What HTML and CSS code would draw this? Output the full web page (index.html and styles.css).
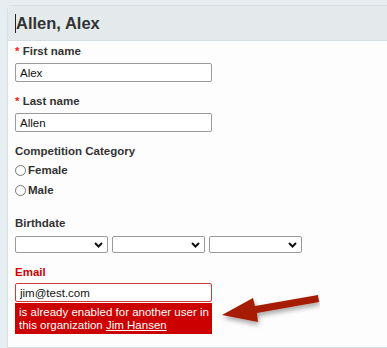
FILE: index.html
```html
<!DOCTYPE html>
<html>
<head>
<meta charset="utf-8" />
<title>Allen, Alex</title>
<link rel="stylesheet" href="styles.css">
</head>

<body>
<div class="panel">
    <div class="panel_head">
        <h1><span class="caret"></span>Allen, Alex</h1>
    </div>

    <div class="panel_body">
        <div class="field">
            <label class="field_label"><span class="req">*</span> First name</label>
            <input class="text_input" type="text" value="Alex" />
        </div>

        <div class="field">
            <label class="field_label"><span class="req">*</span> Last name</label>
            <input class="text_input" type="text" value="Allen" />
        </div>

        <div class="field">
            <label class="field_label">Competition Category</label>
            <div class="radio_row"><span class="radio"></span>Female</div>
            <div class="radio_row"><span class="radio"></span>Male</div>
        </div>

        <div class="field field_birth">
            <label class="field_label">Birthdate</label>
            <div class="select_row">
                <div class="select_box"><svg width="9" height="6" viewBox="0 0 9 6"><path d="M1 1 L4.5 4.5 L8 1" fill="none" stroke="#111" stroke-width="2"/></svg></div>
                <div class="select_box"><svg width="9" height="6" viewBox="0 0 9 6"><path d="M1 1 L4.5 4.5 L8 1" fill="none" stroke="#111" stroke-width="2"/></svg></div>
                <div class="select_box"><svg width="9" height="6" viewBox="0 0 9 6"><path d="M1 1 L4.5 4.5 L8 1" fill="none" stroke="#111" stroke-width="2"/></svg></div>
            </div>
        </div>

        <div class="field field_error">
            <label class="field_label">Email</label>
            <input class="text_input" type="text" value="jim@test.com" />
            <div class="error_box">is already enabled for another user in this organization <a href="#">Jim Hansen</a></div>
        </div>
    </div>
</div>

<!-- flèche d'annotation -->
<svg class="arrow" width="120" height="50" viewBox="200 285 120 50">
    <defs>
        <filter id="ombre" x="-20%" y="-40%" width="140%" height="180%">
            <feGaussianBlur in="SourceAlpha" stdDeviation="2.5"/>
            <feOffset dx="1" dy="3" result="flou"/>
            <feComponentTransfer><feFuncA type="linear" slope="0.35"/></feComponentTransfer>
            <feMerge><feMergeNode/><feMergeNode in="SourceGraphic"/></feMerge>
        </filter>
    </defs>
    <polygon points="222,315 253,298 255,306 318,295 319,302 257,313 258,322" fill="#a61e00" filter="url(#ombre)"/>
</svg>
</body>
</html>
```

FILE: styles.css
```css
body {
    margin: 0;
    padding: 5px 0 0 7px;
    background: #e6eef1;
    font-family: "Liberation Sans", Arial, sans-serif;
    font-size: 11.5px;
    color: #333;
    height: 348px;
    box-sizing: border-box;
    overflow: hidden;
}

.panel {
    background: #fdfdfd;
    border: 1px solid #d9e0e3;
    border-right: none;
    border-radius: 5px 0 0 0;
    height: 100%;
    box-sizing: border-box;
}

.panel_head {
    height: 34px;
    background: #e4e9ec;
    border-bottom: 1px solid #d7dee2;
    border-radius: 5px 0 0 0;
    padding-left: 7px;
    display: flex;
    align-items: center;
}

.panel_head h1 {
    margin: 0;
    font-size: 16.5px;
    font-weight: bold;
    color: #333;
    display: flex;
    align-items: center;
}

.caret {
    display: inline-block;
    width: 1px;
    height: 19px;
    background: #222;
}

.panel_body {
    padding: 3px 0 0 7px;
}

.field {
    margin-bottom: 12px;
}

.field_label {
    display: block;
    font-weight: bold;
    line-height: 14px;
    height: 14px;
    margin-bottom: 5px;
}

.req {
    color: #e8201c;
}

.text_input {
    display: block;
    box-sizing: border-box;
    width: 197px;
    height: 19px;
    margin: 0;
    padding: 0 4px;
    border: 1px solid #9a9a9a;
    border-radius: 2px;
    background: #fff;
    font-family: "Liberation Sans", Arial, sans-serif;
    font-size: 11.5px;
    color: #111;
}

.radio_row {
    display: flex;
    align-items: center;
    height: 14px;
    margin-bottom: 6px;
    font-weight: bold;
}

.radio {
    display: inline-block;
    box-sizing: border-box;
    width: 11px;
    height: 11px;
    border: 1px solid #777;
    border-radius: 50%;
    background: #fff;
    margin-right: 2px;
}

.field_birth {
    margin-top: 19px;
    margin-bottom: 12px;
}

.field_birth .field_label {
    margin-bottom: 6px;
}

.select_row {
    display: flex;
    gap: 4px;
}

.select_box {
    box-sizing: border-box;
    width: 93px;
    height: 17px;
    border: 1px solid #9a9a9a;
    border-radius: 2px;
    background: #fff;
    display: flex;
    align-items: center;
    justify-content: flex-end;
    padding-right: 4px;
}

.field_error .field_label {
    color: #d40000;
    margin-bottom: 4px;
}

.field_error .text_input {
    border-color: #d23a3a;
}

.error_box {
    box-sizing: border-box;
    width: 197px;
    margin-top: 1px;
    padding: 3px 1px 2px 4px;
    background: #cc0000;
    color: #fff;
    line-height: 13px;
}

.error_box a {
    color: #fff;
}

.arrow {
    position: absolute;
    left: 200px;
    top: 285px;
}
```
